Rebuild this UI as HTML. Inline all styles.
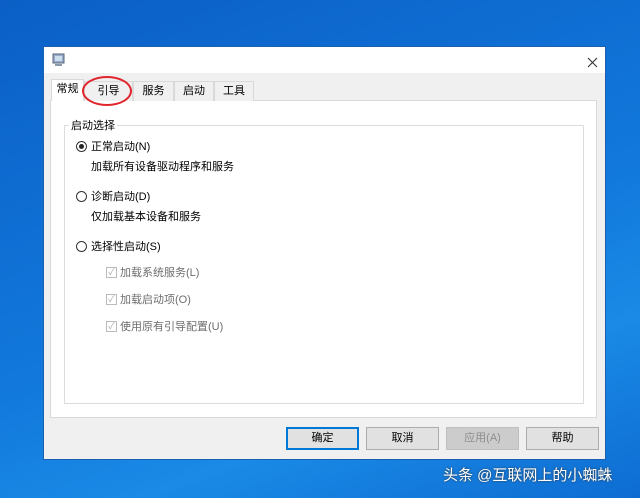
<!DOCTYPE html>
<html><head><meta charset="utf-8"><style>
*{margin:0;padding:0;box-sizing:border-box}
body{width:640px;height:498px;overflow:hidden;position:relative;font-family:"Liberation Sans","Noto Sans CJK SC",sans-serif;font-size:11px;color:#000;
background:linear-gradient(160deg,#0b5fc6 0%,#1279dc 55%,#1a8ae6 75%,#0d6cd2 100%)}
.a{position:absolute}
.dlg{left:43px;top:46px;width:563px;height:414px;background:#f0f0f0;border:1px solid #1c5fb0}
.title{left:0;top:0;width:561px;height:26px;background:#fff}
.tab{top:34px;height:20px;border:1px solid #d9d9d9;border-bottom:none;background:#f0f0f0;text-align:center;line-height:19px;font-size:11px}
.panel{left:6px;top:53px;width:547px;height:318px;background:#fff;border:1px solid #d9d9d9}
.grp{left:13px;top:24px;width:520px;height:279px;border:1px solid #dcdcdc}
.lbl{background:#fff;padding:0 2px}
.btn{top:380px;width:73px;height:23px;background:#e1e1e1;border:1px solid #adadad;text-align:center;line-height:21px;font-size:11px}
.rad{width:11px;height:11px;border:1px solid #333;border-radius:50%;background:#fff}
.chk{width:11px;height:11px;border:1px solid #bbb;background:#fff;color:#aaa;font-size:9px;line-height:9px;text-align:center}
.g{color:#6d6d6d}
</style></head><body>
<div class="a dlg">
 <div class="a title"></div>
 <svg class="a" style="left:8px;top:6px" width="14" height="14"><rect x="1" y="1" width="11" height="9" fill="#9ac" stroke="#567"/><rect x="3" y="3" width="7" height="5" fill="#cde"/><rect x="3" y="11" width="7" height="2" fill="#89a"/></svg>
 <svg class="a" style="left:543px;top:10px" width="11" height="11"><path d="M1 1L10 10M10 1L1 10" stroke="#333" stroke-width="1.1"/></svg>
 <div class="a panel">
  <div class="a grp"></div>
  <div class="a lbl" style="left:18px;top:16px">启动选择</div>
  <div class="a rad" style="left:25px;top:40px"><div style="width:5px;height:5px;background:#222;border-radius:50%;margin:2px"></div></div>
  <div class="a" style="left:40px;top:37px">正常启动(N)</div>
  <div class="a" style="left:40px;top:57px">加载所有设备驱动程序和服务</div>
  <div class="a rad" style="left:25px;top:90px"></div>
  <div class="a" style="left:40px;top:87px">诊断启动(D)</div>
  <div class="a" style="left:40px;top:107px">仅加载基本设备和服务</div>
  <div class="a rad" style="left:25px;top:140px"></div>
  <div class="a" style="left:40px;top:137px">选择性启动(S)</div>
  <div class="a chk" style="left:55px;top:166px">✓</div><div class="a g" style="left:69px;top:163px">加载系统服务(L)</div>
  <div class="a chk" style="left:55px;top:193px">✓</div><div class="a g" style="left:69px;top:190px">加载启动项(O)</div>
  <div class="a chk" style="left:55px;top:220px">✓</div><div class="a g" style="left:69px;top:217px">使用原有引导配置(U)</div>
 </div>
 <div class="a tab" style="left:7px;top:32px;height:22px;width:33px;background:#fff">常规</div>
 <div class="a tab" style="left:40px;width:49px">引导</div>
 <div class="a tab" style="left:89px;width:41px">服务</div>
 <div class="a tab" style="left:130px;width:40px">启动</div>
 <div class="a tab" style="left:170px;width:40px">工具</div>
 <div class="a" style="left:38px;top:29px;width:50px;height:30px;border:2px solid #e0262c;border-radius:50%"></div>
 <div class="a btn" style="left:242px;border:1px solid #0078d7;box-shadow:inset 0 0 0 1px #0078d7">确定</div>
 <div class="a btn" style="left:322px">取消</div>
 <div class="a btn" style="left:402px;background:#ccc;border-color:#bfbfbf;color:#8d8d8d">应用(A)</div>
 <div class="a btn" style="left:482px">帮助</div>
</div>
<div class="a" style="left:443px;top:464px;color:#fff;font-size:15px;text-shadow:0 0 2px #333">头条 @互联网上的小蜘蛛</div>
</body></html>
